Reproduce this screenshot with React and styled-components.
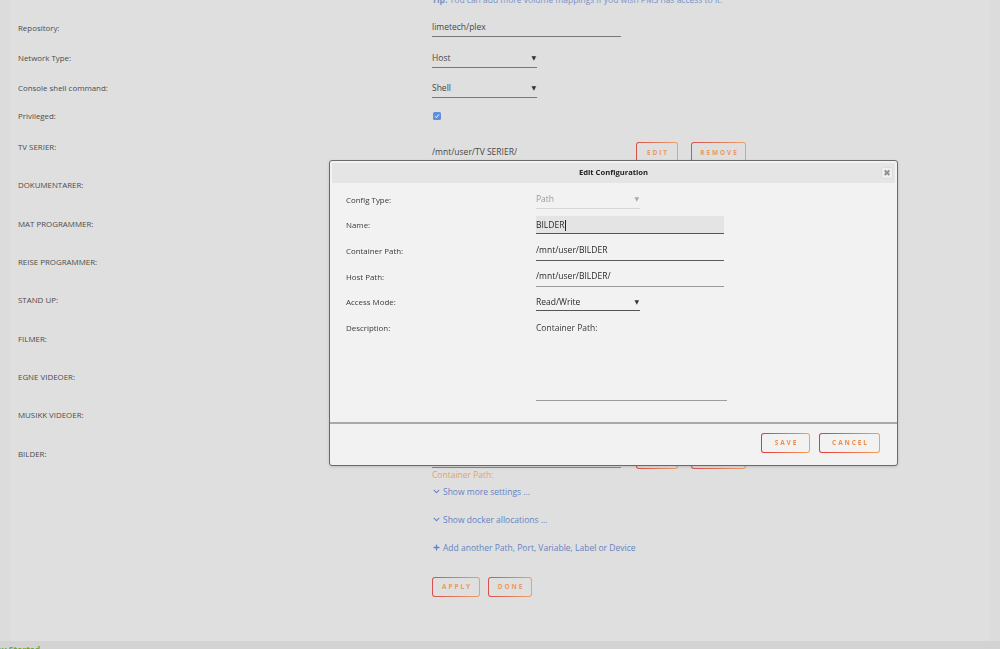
import React from 'react';
import styled, { createGlobalStyle } from 'styled-components';
import { FaChevronDown, FaPlus } from 'react-icons/fa';

const Global = createGlobalStyle`
  html, body { margin: 0; padding: 0; height: 100%; overflow: hidden; }
  body {
    background: #dcdcdc;
    font-family: "Open Sans", "Liberation Sans", sans-serif;
    font-size: 8.5px;
    color: #505050;
  }
  #root { height: 100%; }
  * { box-sizing: border-box; }
`;

const Page = styled.div`
  height: 649px;
  display: flex;
  flex-direction: column;
`;

const Main = styled.main`
  flex: 1;
  margin: 0 10px;
  padding-left: 8px;
  background: #dfdfdf;
  overflow: hidden;
`;

const Row = styled.div`
  display: flex;
  align-items: ${p => (p.$top ? 'flex-start' : 'center')};
  height: ${p => p.$h}px;
  margin-top: ${p => p.$mt || 0}px;
`;

const Label = styled.div`
  width: 414px;
  flex: none;
  font-size: 7.9px;
  line-height: 12px;
  padding-top: ${p => p.$pt || 0}px;
  color: #4c4c4c;
`;

const Value = styled.div`
  flex: 1;
  display: flex;
  flex-direction: ${p => (p.$col ? 'column' : 'row')};
  align-items: ${p => (p.$col ? 'flex-start' : 'center')};
  padding-top: ${p => p.$pt || 0}px;
  gap: ${p => p.$gap || 0}px;
`;

const Tip = styled.div`
  line-height: 12px;
  color: #7592c8;
  b { font-weight: 700; }
`;

const Field = styled.div`
  width: ${p => p.$w}px;
  height: ${p => p.$h || 19}px;
  display: flex;
  align-items: center;
  justify-content: space-between;
  padding: 0;
  border-bottom: 1px solid ${p => p.$line || '#777'};
  background: ${p => p.$bg || 'transparent'};
  color: ${p => p.$color || '#474747'};
  line-height: 12px;
  white-space: nowrap;
`;

const Arrow = styled.span`
  font-family: "DejaVu Sans", sans-serif;
  font-size: 6px;
  color: ${p => p.$color || '#333'};
  margin-right: 1px;
`;

const Check = styled.span`
  width: 8px;
  height: 8px;
  margin-left: 1px;
  border-radius: 1.5px;
  background: #5d8fe0;
  display: flex;
  align-items: center;
  justify-content: center;
`;

const Button = styled.button`
  height: 20px;
  width: ${p => p.$w}px;
  padding: 0 0 0 2px;
  margin: 0;
  border: 1px solid transparent;
  border-radius: 3px;
  background:
    linear-gradient(${p => p.$bg}, ${p => p.$bg}) padding-box,
    linear-gradient(90deg, ${p => p.$from}, ${p => p.$to}) border-box;
  font-family: "Open Sans", "Liberation Sans", sans-serif;
  font-weight: 700;
  font-size: 6.5px;
  letter-spacing: 1.9px;
  color: ${p => p.$text};
  text-transform: uppercase;
  flex: none;
`;

const PageButton = props => (
  <Button $bg="#dfdfdf" $from="#d9504f" $to="#eda168" $text="#e99a62" {...props} />
);
const DialogButton = props => (
  <Button $bg="#f2f2f2" $from="#e2373a" $to="#f7a05a" $text="#f08c48" {...props} />
);

const PathTop = styled.div`
  height: 20px;
  display: flex;
  align-items: center;
`;

const Desc = styled.div`
  line-height: 12px;
  color: #e2a365;
`;

const Link = styled.div`
  display: flex;
  align-items: center;
  gap: 3px;
  color: #6583c2;
  line-height: 12px;
  padding-left: 1px;
  svg { flex: none; }
`;

const Footer = styled.footer`
  height: 8px;
  background: #d3d3d3;
  overflow: hidden;
`;

const Status = styled.div`
  margin-left: -17px;
  margin-top: 3px;
  line-height: 12px;
  font-weight: 700;
  color: #6aa534;
`;

/* Dialog */
const Dialog = styled.section`
  position: fixed;
  left: 329px;
  top: 160px;
  width: 569px;
  background: #f2f2f2;
  border: 1px solid #6a6a6a;
  border-radius: 3px;
  box-shadow: 0 1px 3px rgba(0,0,0,0.15);
  color: #3a3a3a;
`;

const TitleBar = styled.header`
  position: relative;
  margin: 2px 2px 0;
  height: 20px;
  background: #e5e5e5;
  display: flex;
  align-items: center;
  justify-content: center;
  font-size: 7.6px;
  font-weight: 700;
  color: #222;
  padding-bottom: 2px;
`;

const Close = styled.span`
  position: absolute;
  right: 2px;
  top: 4px;
  width: 12px;
  height: 12px;
  border: 1px solid #dcdcdc;
  border-radius: 2px;
  background: #eeeeee;
  color: #8e8e8e;
  font-family: "DejaVu Sans", sans-serif;
  font-size: 9px;
  line-height: 1;
  display: flex;
  align-items: center;
  justify-content: center;
`;

const Body = styled.div`
  padding: 4px 0 21px 16px;
`;

const DRow = styled.div`
  display: flex;
  align-items: ${p => (p.$top ? 'flex-start' : 'center')};
  height: ${p => p.$h || 25.6}px;
`;

const DLabel = styled.div`
  width: 190px;
  flex: none;
  font-size: 7.9px;
  line-height: 12px;
  padding-top: ${p => p.$pt || 0}px;
  color: #3a3a3a;
`;

const Caret = styled.span`
  display: inline-block;
  width: 1px;
  height: 11px;
  background: #222;
  vertical-align: middle;
  margin-left: 1px;
`;

const TextArea = styled.div`
  width: 191px;
  height: 86px;
  padding-top: 7px;
  line-height: 12px;
  border-bottom: 1px solid #9c9c9c;
  color: #3a3a3a;
`;

const Divider = styled.hr`
  margin: 0;
  border: none;
  height: 2px;
  background: #a9a9a9;
`;

const DFooter = styled.footer`
  display: flex;
  justify-content: flex-end;
  gap: 9px;
  padding: 9px 17px 12px;
`;

const paths = [
  ['TV SERIER', '/mnt/user/TV SERIER/'],
  ['DOKUMENTARER', '/mnt/user/DOKUMENTARER/'],
  ['MAT PROGRAMMER', '/mnt/user/MAT PROGRAMMER/'],
  ['REISE PROGRAMMER', '/mnt/user/REISE PROGRAMMER/'],
  ['STAND UP', '/mnt/user/STAND UP/'],
  ['FILMER', '/mnt/user/FILMER/'],
  ['EGNE VIDEOER', '/mnt/user/EGNE VIDEOER/'],
  ['MUSIKK VIDEOER', '/mnt/user/MUSIKK VIDEOER/'],
  ['BILDER', ''],
];

export default function App() {
  return (
    <Page>
      <Global />
      <Main>
        <Row $h={18} $mt={-6} $top>
          <Label />
          <Value>
            <Tip><b>Tip:</b> You can add more volume mappings if you wish PMS has access to it.</Tip>
          </Value>
        </Row>
        <Row $h={31}>
          <Label>Repository:</Label>
          <Value><Field $w={189}>limetech/plex</Field></Value>
        </Row>
        <Row $h={30}>
          <Label>Network Type:</Label>
          <Value><Field $w={105}>Host<Arrow>▼</Arrow></Field></Value>
        </Row>
        <Row $h={30}>
          <Label>Console shell command:</Label>
          <Value><Field $w={105}>Shell<Arrow>▼</Arrow></Field></Value>
        </Row>
        <Row $h={26}>
          <Label>Privileged:</Label>
          <Value>
            <Check>
              <svg width="6" height="6" viewBox="0 0 6 6">
                <path d="M1 3.2 L2.4 4.6 L5 1.4" fill="none" stroke="#fff" strokeWidth="1" />
              </svg>
            </Check>
          </Value>
        </Row>
        {paths.map(([name, path]) => (
          <Row key={name} $h={38.333} $top>
            <Label $pt={12}>{name}:</Label>
            <Value $col $pt={13}>
              <PathTop>
                <Field $w={189} $line="#8a8a8a">{path}</Field>
                <PageButton $w={42} style={{ marginLeft: 15 }}>Edit</PageButton>
                <PageButton $w={55} style={{ marginLeft: 13 }}>Remove</PageButton>
              </PathTop>
              <Desc>Container Path:</Desc>
            </Value>
          </Row>
        ))}
        <Row $h={28} $mt={4}>
          <Label />
          <Value><Link><FaChevronDown size={7} />Show more settings ...</Link></Value>
        </Row>
        <Row $h={28}>
          <Label />
          <Value><Link><FaChevronDown size={7} />Show docker allocations ...</Link></Value>
        </Row>
        <Row $h={28}>
          <Label />
          <Value><Link><FaPlus size={7} />Add another Path, Port, Variable, Label or Device</Link></Value>
        </Row>
        <Row $h={20} $mt={15}>
          <Label />
          <Value $gap={8}>
            <PageButton $w={48}>Apply</PageButton>
            <PageButton $w={44}>Done</PageButton>
          </Value>
        </Row>
      </Main>
      <Footer>
        <Status>Array Started</Status>
      </Footer>

      <Dialog>
        <TitleBar>
          Edit Configuration
          <Close>✖</Close>
        </TitleBar>
        <Body>
          <DRow>
            <DLabel>Config Type:</DLabel>
            <Field $w={104} $h={18} $line="#d6d6d6" $color="#9a9a9a">Path<Arrow $color="#aaa">▼</Arrow></Field>
          </DRow>
          <DRow>
            <DLabel>Name:</DLabel>
            <Field $w={188} $h={18} $bg="#e4e4e4" $line="#555" $color="#2a2a2a">
              <span>BILDER<Caret /></span>
            </Field>
          </DRow>
          <DRow>
            <DLabel>Container Path:</DLabel>
            <Field $w={188} $h={20} $line="#5c5c5c" $color="#2a2a2a">/mnt/user/BILDER</Field>
          </DRow>
          <DRow>
            <DLabel>Host Path:</DLabel>
            <Field $w={188} $h={20} $line="#9a9a9a" $color="#2a2a2a">/mnt/user/BILDER/</Field>
          </DRow>
          <DRow>
            <DLabel>Access Mode:</DLabel>
            <Field $w={104} $h={18} $line="#555" $color="#2a2a2a">Read/Write<Arrow>▼</Arrow></Field>
          </DRow>
          <DRow $top $h={86}>
            <DLabel $pt={7}>Description:</DLabel>
            <TextArea>Container Path:</TextArea>
          </DRow>
        </Body>
        <Divider />
        <DFooter>
          <DialogButton $w={49}>Save</DialogButton>
          <DialogButton $w={61}>Cancel</DialogButton>
        </DFooter>
      </Dialog>
    </Page>
  );
}
